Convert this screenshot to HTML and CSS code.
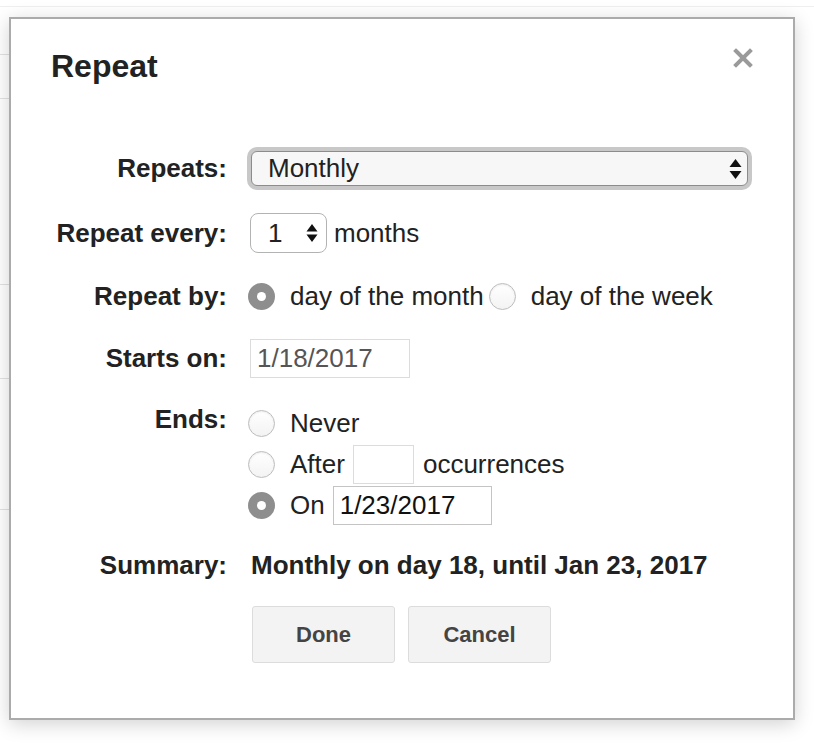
FILE: index.html
```html
<!DOCTYPE html>
<html>
<head>
<meta charset="utf-8">
<link rel="stylesheet" href="styles.css">
</head>
<body>
<div class="page">
  <div class="bg-row r0"></div>
  <div class="bg-row side r1"></div>
  <div class="bg-row side r2"></div>
  <div class="bg-row side r3"></div>
  <div class="bg-row side r4"></div>
  <div class="bg-row side r5"></div>
</div>

<div class="dialog">
  <h1 class="title">Repeat</h1>
  <svg class="close" width="20" height="20" viewBox="0 0 20 20"><path d="M3 3 L17 17 M17 3 L3 17" stroke="#9a9a9a" stroke-width="4" stroke-linecap="square"/></svg>

  <div class="form">
    <div class="label">Repeats:</div>
    <div class="value">
      <div class="select-ring">
        <div class="select">
          <span>Monthly</span>
          <svg width="13" height="22" viewBox="0 0 13 22"><path d="M6.5 1 L12.5 9 L0.5 9 Z M0.5 13 L12.5 13 L6.5 21 Z" fill="#111"/></svg>
        </div>
      </div>
    </div>

    <div class="label">Repeat every:</div>
    <div class="value row">
      <div class="spin">
        <span>1</span>
        <svg width="12" height="20" viewBox="0 0 12 20"><path d="M6 1 L11.5 8.5 L0.5 8.5 Z M0.5 11.5 L11.5 11.5 L6 19 Z" fill="#111"/></svg>
      </div>
      <span class="after-spin">months</span>
    </div>

    <div class="label">Repeat by:</div>
    <div class="value row h40">
      <span class="radio checked"></span>
      <span class="rtext">day of the month</span>
      <span class="radio second"></span>
      <span class="rtext">day of the week</span>
    </div>

    <div class="label">Starts on:</div>
    <div class="value">
      <div class="field start">1/18/2017</div>
    </div>

    <div class="label top">Ends:</div>
    <div class="value ends">
      <div class="opt"><span class="radio"></span><span class="rtext">Never</span></div>
      <div class="opt"><span class="radio"></span><span class="rtext">After</span><div class="field occ"></div><span>occurrences</span></div>
      <div class="opt"><span class="radio checked"></span><span class="rtext">On</span><div class="field until">1/23/2017</div></div>
    </div>

    <div class="label">Summary:</div>
    <div class="value summary">Monthly on day 18, until Jan 23, 2017</div>

    <div></div>
    <div class="value buttons">
      <button class="btn">Done</button>
      <button class="btn">Cancel</button>
    </div>
  </div>
</div>
</body>
</html>
```

FILE: styles.css
```css
html, body {
  margin: 0;
  padding: 0;
  background: #fff;
  font-family: "Liberation Sans", Arial, sans-serif;
  color: #222;
}

.page {
  width: 814px;
  height: 746px;
  overflow: hidden;
}

.bg-row {
  border-bottom: 1px solid #e2e2e2;
}
.bg-row.side { width: 300px; }
.r0 { height: 6px; border-bottom-color: #efefef; }
.r1 { height: 47px; }
.r2 { height: 43px; }
.r3 { height: 185px; }
.r4 { height: 93px; }
.r5 { height: 130px; }

.dialog {
  position: absolute;
  left: 9px;
  top: 17px;
  width: 786px;
  height: 703px;
  box-sizing: border-box;
  border: 2px solid #ababab;
  background: #fff;
  box-shadow: 0 4px 18px rgba(0, 0, 0, 0.18);
  padding: 28px 0 0 40px;
}

.title {
  margin: 0;
  font-size: 32px;
  line-height: 38px;
  font-weight: bold;
  color: #222;
}

.close {
  position: absolute;
  left: 722px;
  top: 29px;
}

.form {
  margin-top: 62px;
  display: grid;
  grid-template-columns: 176px 1fr;
  column-gap: 21px;
  row-gap: 23px;
  font-size: 26px;
}

.label {
  font-weight: bold;
  text-align: right;
  align-self: center;
  white-space: nowrap;
  color: #222;
}
.label.top {
  align-self: start;
  line-height: 32px;
  margin-top: 2px;
}

.value {
  display: flex;
  align-items: center;
  white-space: nowrap;
}

.h40 { height: 40px; }

.select-ring {
  margin-left: -1px;
  width: 505px;
  height: 43px;
  box-sizing: border-box;
  padding: 4px;
  border-radius: 10px;
  background: #c8c8c8;
}
.select {
  height: 100%;
  box-sizing: border-box;
  border: 1px solid #8c8c8c;
  border-radius: 6px;
  background: #f7f7f7;
  display: flex;
  align-items: center;
  justify-content: space-between;
  padding: 0 5px 0 16px;
}

.spin {
  margin-left: 2px;
  width: 77px;
  height: 40px;
  box-sizing: border-box;
  border: 1px solid #b3b3b3;
  border-radius: 8px;
  background: #fff;
  display: flex;
  align-items: center;
  justify-content: space-between;
  padding: 0 8px 0 17px;
}
.after-spin { margin-left: 7px; }

.radio {
  width: 27px;
  height: 27px;
  box-sizing: border-box;
  border-radius: 50%;
  border: 1px solid #bdbdbd;
  background: linear-gradient(#ffffff, #f3f3f3);
  box-shadow: inset 0 1px 2px rgba(0, 0, 0, 0.08);
  flex: none;
  position: relative;
}
.radio.checked {
  border: none;
  background: #8e8e8e;
  box-shadow: none;
}
.radio.checked::after {
  content: "";
  position: absolute;
  left: 9px;
  top: 9px;
  width: 9px;
  height: 9px;
  border-radius: 50%;
  background: #fff;
}
.radio.second { margin-left: 5px; }
.rtext { margin-left: 15px; }

.field {
  height: 39px;
  box-sizing: border-box;
  border: 1px solid #dcdcdc;
  background: #fff;
  display: flex;
  align-items: center;
  padding: 0 6px;
}
.start {
  margin-left: 2px;
  width: 160px;
  color: #555;
}
.occ {
  width: 61px;
  margin: 0 9px 0 8px;
}
.until {
  width: 159px;
  margin-left: 8px;
  border-color: #c4c4c4;
  color: #111;
}

.ends {
  flex-direction: column;
  align-items: flex-start;
  gap: 1px;
  margin-top: 2px;
}
.opt {
  height: 40px;
  display: flex;
  align-items: center;
}

.summary {
  height: 34px;
  font-weight: bold;
  color: #222;
  margin-left: 3px;
}

.buttons {
  margin-left: 4px;
  gap: 13px;
  margin-top: 1px;
}
.btn {
  width: 143px;
  height: 57px;
  box-sizing: border-box;
  border: 1px solid #dcdcdc;
  border-radius: 3px;
  background: #f3f3f3;
  font-family: "Liberation Sans", Arial, sans-serif;
  font-size: 22px;
  font-weight: bold;
  color: #444;
  padding: 0;
}
```
